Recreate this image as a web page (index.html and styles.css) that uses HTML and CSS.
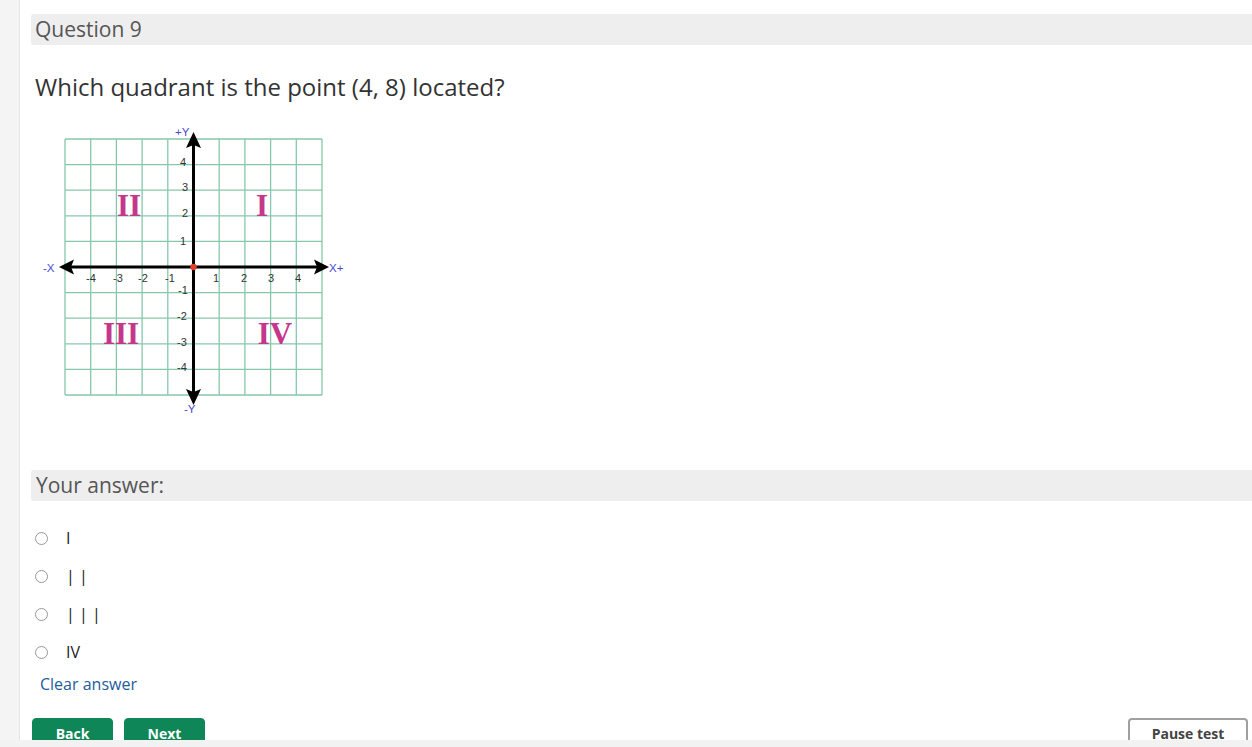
FILE: index.html
```html
<!DOCTYPE html>
<html>
<head>
<meta charset="utf-8">
<link rel="stylesheet" href="styles.css">
</head>
<body>
<div class="page">
  <aside class="sidebar"></aside>
  <main class="main">
    <div class="qhead">Question 9</div>
    <p class="qtext">Which quadrant is the point (4, 8) located?</p>
    <div class="figure">
      <svg width="313" height="295" viewBox="37 125 313 295" xmlns="http://www.w3.org/2000/svg">
        <rect x="37" y="125" width="313" height="295" fill="#fff"/>
        <path d="M65 139V395M90.7 139V395M116.4 139V395M142.1 139V395M167.8 139V395M219.2 139V395M244.9 139V395M270.6 139V395M296.3 139V395M322 139V395M65 139H322M65 164.6H322M65 190.2H322M65 215.8H322M65 241.4H322M65 292.6H322M65 318.2H322M65 343.8H322M65 369.4H322M65 395H322" stroke="#86c8ad" stroke-width="1.3" fill="none"/>
        <g font-family="Liberation Sans, Arial, sans-serif" font-size="11" fill="#333" text-anchor="middle">
          <text x="91" y="282">-4</text>
          <text x="118" y="282">-3</text>
          <text x="143" y="282">-2</text>
          <text x="170" y="282">-1</text>
          <text x="216" y="282">1</text>
          <text x="244" y="282">2</text>
          <text x="271" y="282">3</text>
          <text x="298" y="282">4</text>
          <text x="183" y="166">4</text>
          <text x="185" y="191">3</text>
          <text x="185" y="217">2</text>
          <text x="183" y="245">1</text>
          <text x="183" y="294">-1</text>
          <text x="182" y="320">-2</text>
          <text x="182" y="346">-3</text>
          <text x="182" y="371">-4</text>
        </g>
        <g font-family="Liberation Serif, 'Times New Roman', serif" font-weight="bold" font-size="31" fill="#c4378a" text-anchor="middle">
          <text x="129" y="216">II</text>
          <text x="262" y="216">I</text>
          <text x="121" y="344">III</text>
          <text x="275" y="344">IV</text>
        </g>
        <g stroke="#000" stroke-width="3">
          <line x1="70" y1="267" x2="318" y2="267"/>
          <line x1="193.5" y1="143" x2="193.5" y2="393"/>
        </g>
        <g fill="#000">
          <polygon points="59,267 74,259.5 71,267 74,274.5"/>
          <polygon points="329,267 314,259.5 317,267 314,274.5"/>
          <polygon points="193.5,132 186,148 193.5,145 201,148"/>
          <polygon points="193.5,405 186,389 193.5,392 201,389"/>
        </g>
        <circle cx="193.5" cy="267" r="3.2" fill="#e0402a"/>
        <g font-family="Liberation Sans, Arial, sans-serif" font-size="11.5" fill="#4a4ad0">
          <text x="175" y="136">+Y</text>
          <text x="43" y="272">-X</text>
          <text x="329" y="272">X+</text>
          <text x="184" y="413">-Y</text>
        </g>
      </svg>
    </div>
    <div class="ahead">Your answer:</div>
    <form class="options">
      <label class="opt"><input type="radio" name="q9"><span>I</span></label>
      <label class="opt"><input type="radio" name="q9"><span>| |</span></label>
      <label class="opt"><input type="radio" name="q9"><span>| | |</span></label>
      <label class="opt"><input type="radio" name="q9"><span>IV</span></label>
    </form>
    <a class="clear" href="#">Clear answer</a>
    <div class="actions">
      <div class="nav">
        <button class="btn green">Back</button>
        <button class="btn green">Next</button>
      </div>
      <button class="btn pause">Pause test</button>
    </div>
  </main>
</div>
<div class="footer"></div>
</body>
</html>
```
FILE: styles.css
```css
html, body {
  margin: 0;
  padding: 0;
  background: #fff;
  font-family: "Open Sans", "Noto Sans", sans-serif;
  color: #333;
  overflow: hidden;
}
.page {
  display: flex;
  min-height: 747px;
}
.sidebar {
  width: 19px;
  flex: none;
  background: #f4f4f4;
  border-right: 1px solid #e6e6e6;
}
.main {
  flex: 1;
  padding: 14px 0 0 11px;
}
.qhead {
  height: 31px;
  line-height: 31px;
  background: #eeeeee;
  border-radius: 3px 0 0 3px;
  padding-left: 4px;
  font-size: 21px;
  color: #555;
}
.qtext {
  margin: 26px 0 0 4px;
  font-size: 24px;
  line-height: 32px;
  color: #333;
}
.figure {
  margin: 22px 0 0 6px;
  height: 295px;
}
.figure svg {
  display: block;
}
.ahead {
  margin-top: 50px;
  height: 31px;
  line-height: 31px;
  background: #eeeeee;
  border-radius: 3px 0 0 3px;
  padding-left: 5px;
  font-size: 21px;
  color: #555;
}
.options {
  margin: 18px 0 0 0;
  display: flex;
  flex-direction: column;
}
.opt {
  height: 38px;
  display: flex;
  align-items: center;
  font-size: 16px;
  color: #222;
}
.opt span {
  color: #222;
}
.opt input {
  margin: 0 18px 0 4px;
  width: 13px;
  height: 13px;
  opacity: 0.75;
}
.clear {
  display: block;
  margin: 1px 0 0 9px;
  font-size: 16px;
  line-height: 24px;
  color: #1d5d9b;
  text-decoration: none;
}
.actions {
  margin-top: 22px;
  display: flex;
  justify-content: space-between;
  padding-right: 4px;
}
.nav {
  display: flex;
  gap: 11px;
  padding-left: 1px;
}
.btn {
  height: 31px;
  border-radius: 4px;
  font-family: "Open Sans", "Noto Sans", sans-serif;
  font-weight: bold;
  font-size: 14px;
  padding: 0;
  line-height: 29px;
}
.green {
  width: 81px;
  background: #0e8657;
  border: 1px solid #0e8657;
  color: #fff;
}
.pause {
  width: 120px;
  background: #fff;
  border: 2px solid #a0a0a0;
  color: #444;
  line-height: 27px;
  padding-bottom: 1px;
}
.footer {
  position: fixed;
  left: 0;
  right: 0;
  bottom: 0;
  height: 7px;
  background: #f2f2f2;
}
```
